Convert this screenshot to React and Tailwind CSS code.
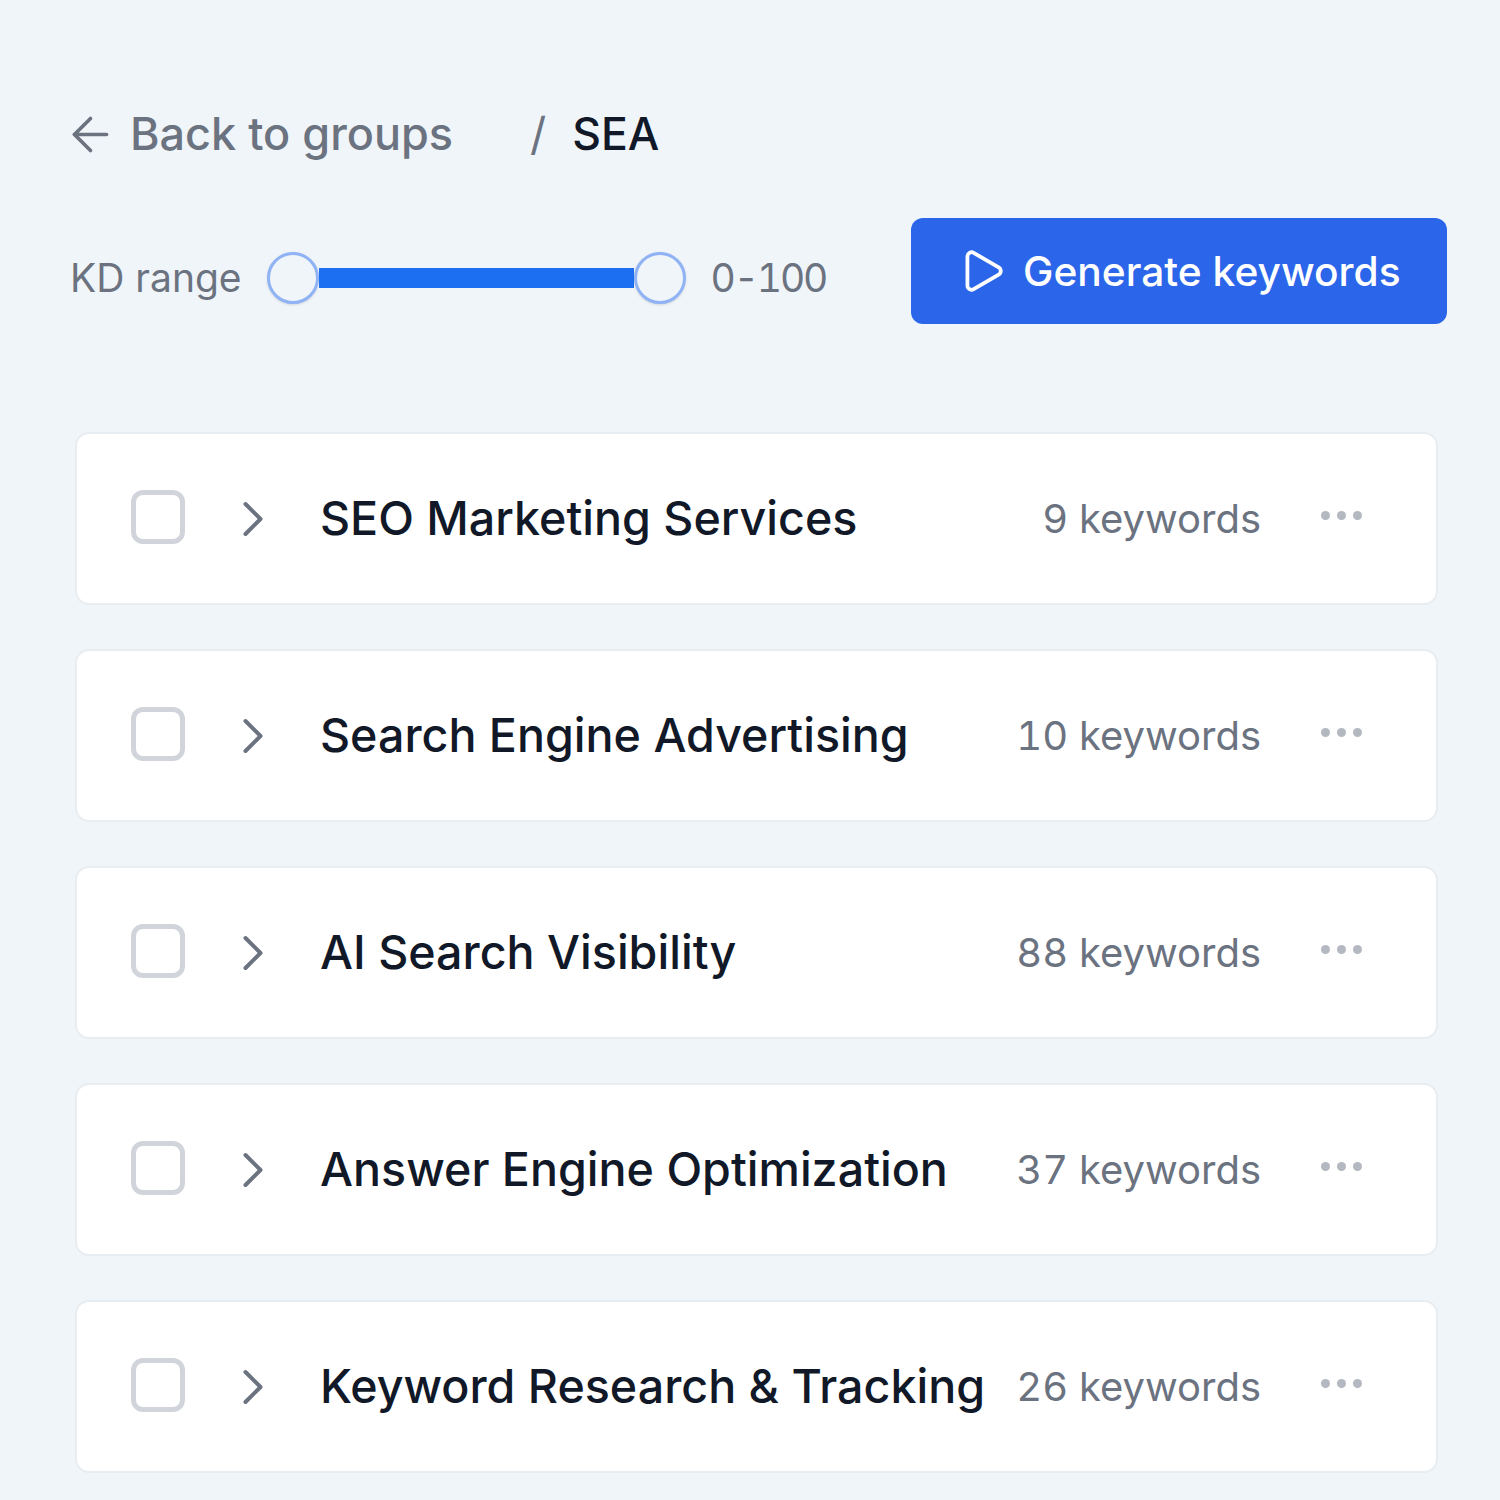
import { ArrowLeft, ChevronRight, Play } from 'lucide-react'

const groups = [
  { name: 'SEO Marketing Services', count: 9 },
  { name: 'Search Engine Advertising', count: 10 },
  { name: 'AI Search Visibility', count: 88 },
  { name: 'Answer Engine Optimization', count: 37 },
  { name: 'Keyword Research & Tracking', count: 26 },
]

const Thumb = () => (
  <div className="w-[52px] h-[52px] rounded-full bg-[#f0f5f9] border-[3px] border-[#8fb3f5] shrink-0 shadow-sm"></div>
)

const GroupRow = ({ name, count }) => (
  <div className="h-[173px] bg-white border-2 border-[#e8edf2] rounded-[14px] flex items-center pl-[54px] pr-[74px]">
    <div className="w-[54px] h-[54px] mb-[3px] rounded-[12px] border-[5px] border-[#d1d5db] shrink-0"></div>
    <ChevronRight className="w-[60px] h-[60px] ml-[38px] text-[#6b7280] shrink-0" strokeWidth={1.6} />
    <div className="ml-[37px] text-[46.6px] font-medium text-[#111827] whitespace-nowrap">{name}</div>
    <div className="ml-auto text-[40px] tabular-nums text-[#6b7280] whitespace-nowrap">{count} keywords</div>
    <div className="ml-[60px] flex gap-[7px] pb-[6px] shrink-0">
      <div className="w-[9px] h-[9px] rounded-full bg-[#b4b8c0]"></div>
      <div className="w-[9px] h-[9px] rounded-full bg-[#b4b8c0]"></div>
      <div className="w-[9px] h-[9px] rounded-full bg-[#b4b8c0]"></div>
    </div>
  </div>
)

const App = () => {
  return (
    <div className="w-[1500px] h-[1500px] overflow-hidden bg-[#f0f5f9] font-['Inter',sans-serif] pt-[106px] pl-[72px] pr-[53px]">
      <div className="flex items-center h-[56px]">
        <ArrowLeft className="w-[55px] h-[55px] -ml-[9px] text-[#6b7280] shrink-0" strokeWidth={1.6} />
        <span className="ml-[12px] text-[45px] font-medium text-[#6b7280]">Back to groups</span>
        <span className="ml-[77px] text-[45px] text-[#6b7280]">/</span>
        <span className="ml-[26px] text-[44.5px] font-medium text-[#111827]">SEA</span>
      </div>

      <div className="flex items-start mt-[56px]">
        <div className="flex items-center h-[106px] pt-[14px] -ml-[2px]">
          <span className="text-[39px] text-[#6b7280]">KD range</span>
          <div className="ml-[25px] flex items-center">
            <Thumb />
            <div className="w-[315px] h-[20px] bg-[#1d6ff2]"></div>
            <Thumb />
          </div>
          <span className="ml-[25px] text-[39px] tabular-nums tracking-[-2.2px] text-[#6b7280]">0-100</span>
        </div>
        <button className="ml-auto w-[536px] h-[106px] bg-[#2b66ea] rounded-[12px] text-white flex items-center pl-[46px] gap-[16px] text-[40.7px] font-medium">
          <Play className="w-[50px] h-[50px] shrink-0" strokeWidth={1.8} />
          <span className="pt-[2px]">Generate keywords</span>
        </button>
      </div>

      <div className="mt-[108px] ml-[3px] mr-[9px] flex flex-col gap-[44px]">
        {groups.map((g) => (
          <GroupRow key={g.name} name={g.name} count={g.count} />
        ))}
      </div>
    </div>
  )
}

export default App
